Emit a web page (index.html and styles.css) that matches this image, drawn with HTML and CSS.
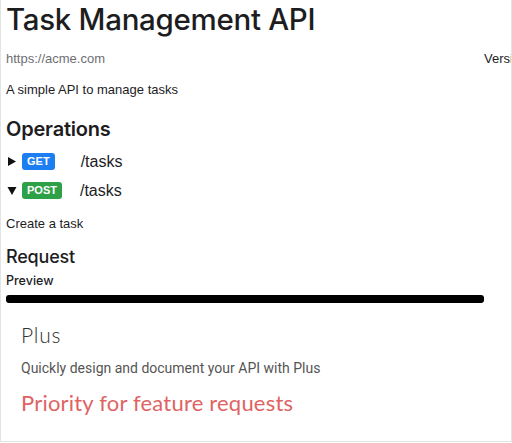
FILE: index.html
```html
<!DOCTYPE html>
<html lang="en">
<head>
    <meta charset="UTF-8">
    <meta name="viewport" content="width=device-width, initial-scale=1.0">
    <title>Task Management API</title>
    <link rel="stylesheet" href="styles.css">
</head>
<body>
<div class="frame">
    <div class="doc">
        <h1 class="title">Task Management API</h1>

        <div class="meta">
            <span class="server">https://acme.com</span>
            <span class="version">Version 1.0.0</span>
        </div>

        <p class="desc">A simple API to manage tasks</p>

        <h2 class="section">Operations</h2>

        <ul class="ops">
            <li class="op">
                <svg class="caret" width="8" height="9" viewBox="0 0 8 9"><path d="M0 0 L8 4.5 L0 9 Z" fill="#111"/></svg>
                <span class="badge get">GET</span>
                <span class="path">/tasks</span>
            </li>
            <li class="op">
                <svg class="caret" width="9" height="8" viewBox="0 0 9 8"><path d="M0 0 L9 0 L4.5 8 Z" fill="#111"/></svg>
                <span class="badge post">POST</span>
                <span class="path">/tasks</span>
            </li>
        </ul>

        <p class="desc op-desc">Create a task</p>

        <h3 class="sub">Request</h3>
        <div class="preview-label">Preview</div>
        <div class="code-bar"></div>
    </div>

    <!-- plus promo -->
    <div class="plus">
        <div class="plus-title">Plus</div>
        <p class="plus-text">Quickly design and document your API with Plus</p>
        <div class="plus-feature">Priority for feature requests</div>
    </div>
</div>
</body>
</html>
```
FILE: styles.css
```css
body {
    margin: 0;
    padding: 0;
    background-color: #ffffff;
    font-family: "Liberation Sans", Arial, sans-serif;
    color: #1d1d1f;
}

.frame {
    width: 510px;
    height: 441px;
    border-left: 1px solid #e4e4e4;
    border-right: 1px solid #e4e4e4;
    border-bottom: 1px solid #e4e4e4;
    overflow: hidden;
}

.doc {
    padding: 0 5px;
}

.title {
    margin: 0;
    padding-top: 2px;
    font-family: Inter, "Liberation Sans", sans-serif;
    font-size: 29.5px;
    font-weight: 500;
    line-height: 34px;
    letter-spacing: -0.3px;
    color: #1d1d1f;
}

.meta {
    display: flex;
    width: 554px;
    margin-top: 15px;
    font-size: 13px;
    line-height: 16px;
}

.server {
    color: #6e6e73;
}

/* バージョン表示は右端で切れる */
.version {
    margin-left: auto;
    color: #1d1d1f;
}

.desc {
    margin: 15px 0 0;
    font-size: 13px;
    line-height: 16px;
}

.section {
    margin: 19px 0 0;
    font-family: Inter, "Liberation Sans", sans-serif;
    font-size: 20px;
    font-weight: 600;
    line-height: 24px;
    letter-spacing: -0.2px;
}

.ops {
    list-style: none;
    margin: 6px 0 0;
    padding: 0;
}

.op {
    display: flex;
    align-items: center;
    height: 29px;
}

.caret {
    display: block;
    width: 10px;
    margin-left: 1px;
}

.badge {
    display: inline-block;
    margin-left: 5px;
    padding: 0 5px;
    height: 17px;
    line-height: 17px;
    border-radius: 3px;
    font-size: 11px;
    font-weight: bold;
    color: #ffffff;
}

.get {
    background-color: #1c7ef1;
}

.post {
    background-color: #2ea048;
}

.path {
    font-size: 16px;
}

.op .get + .path {
    margin-left: 26px;
}

.op .post + .path {
    margin-left: 18px;
}

.op-desc {
    margin-top: 11px;
}

.sub {
    margin: 14px 0 0;
    font-family: Inter, "Liberation Sans", sans-serif;
    font-size: 18px;
    font-weight: 500;
    line-height: 22px;
    letter-spacing: -0.2px;
}

.preview-label {
    margin-top: 5px;
    font-family: Inter, "Liberation Sans", sans-serif;
    font-size: 12.5px;
    font-weight: 500;
    line-height: 16px;
}

.code-bar {
    margin-top: 6px;
    width: 478px;
    height: 8px;
    background-color: #000000;
    border-radius: 3px;
}

.plus {
    padding: 19px 20px 0;
}

.plus-title {
    font-family: Lato, "Open Sans", sans-serif;
    font-size: 21px;
    font-weight: 300;
    line-height: 26px;
    letter-spacing: 0.8px;
    color: #333333;
}

.plus-text {
    margin: 11px 0 0;
    font-family: Roboto, sans-serif;
    font-size: 14px;
    line-height: 18px;
    color: #555555;
}

.plus-feature {
    margin-top: 13px;
    font-family: Lato, "Open Sans", sans-serif;
    font-size: 22px;
    font-weight: 400;
    line-height: 26px;
    letter-spacing: 0.2px;
    color: #e06363;
}
```
